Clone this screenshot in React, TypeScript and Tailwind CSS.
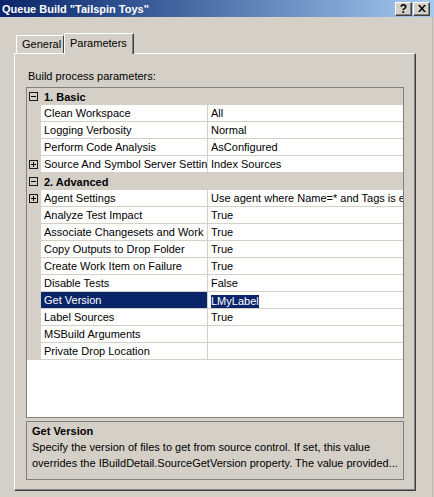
import React from "react";

function Box({ plus }: { plus?: boolean }) {
  return (
    <svg width="9" height="9" viewBox="0 0 9 9" className="block">
      <rect x="0.5" y="0.5" width="8" height="8" fill="none" stroke="#1a1a1a" />
      <line x1="2" y1="4.5" x2="7" y2="4.5" stroke="#000" />
      {plus && <line x1="4.5" y1="2" x2="4.5" y2="7" stroke="#000" />}
    </svg>
  );
}

function Category({ label }: { label: string }) {
  return (
    <div className="flex h-[17px] bg-[#d4d0c8] items-center">
      <div className="w-[14px] pl-[2px] flex items-center">
        <Box />
      </div>
      <div className="pl-[3px] font-bold leading-[16px] whitespace-nowrap">{label}</div>
    </div>
  );
}

function Row({
  name,
  value,
  plus,
  selected,
}: {
  name: string;
  value?: React.ReactNode;
  plus?: boolean;
  selected?: boolean;
}) {
  return (
    <div className="flex h-[17px] border-b border-[#d4d0c8]">
      <div className="w-[14px] shrink-0 bg-[#d4d0c8] pl-[2px] flex items-center">
        {plus && <Box plus />}
      </div>
      <div
        className={
          selected
            ? "w-[166px] shrink-0 pl-[3px] leading-[16px] overflow-hidden whitespace-nowrap bg-[#0a246a] text-white"
            : "w-[166px] shrink-0 pl-[3px] leading-[16px] overflow-hidden whitespace-nowrap"
        }
      >
        {name}
      </div>
      <div className="w-px shrink-0 bg-[#d4d0c8]" />
      <div className="w-[195px] shrink-0 pl-[3px] leading-[16px] overflow-hidden whitespace-nowrap">
        {value}
      </div>
    </div>
  );
}

export default function App() {
  return (
    <div className="w-[434px] h-[497px] bg-[#d4d0c8] overflow-hidden font-['Liberation_Sans',Arial,sans-serif] text-[11px] text-black">
      {/* Title bar */}
      <div className="h-[17px] flex items-center bg-linear-to-r from-[#0a246a] to-[#a6caf0] pl-[2px] pr-[4px]">
        <div className="flex-1 text-white font-bold leading-[14px] whitespace-nowrap">
          Queue Build "Tailspin Toys"
        </div>
        <div className="flex gap-[1px]">
          <div className="w-[17px] h-[14px] bg-[#d4d0c8] border border-t-white border-l-white border-r-[#404040] border-b-[#404040] shadow-[inset_-1px_-1px_0_#808080] flex items-center justify-center font-bold text-[12px] leading-[12px]">
            ?
          </div>
          <div className="w-[17px] h-[14px] bg-[#d4d0c8] border border-t-white border-l-white border-r-[#404040] border-b-[#404040] shadow-[inset_-1px_-1px_0_#808080] flex items-center justify-center">
            <svg width="8" height="7" viewBox="0 0 8 7">
              <path d="M0 0 L2 0 L4 2.5 L6 0 L8 0 L5 3.5 L8 7 L6 7 L4 4.5 L2 7 L0 7 L3 3.5 Z" fill="#000" />
            </svg>
          </div>
        </div>
      </div>

      <div className="w-[433px] h-[480px] border-r border-[#bdb9b1]">
        {/* Tabs */}
        <div className="pt-[16px]">
          <div className="flex items-end h-[20px] pl-[16px]">
            <div className="h-[18px] w-[48px] border-t border-l border-r border-t-white border-l-white border-r-[#404040] pl-[5px] pt-[2px] leading-[13px] whitespace-nowrap">
              General
            </div>
            <div className="relative z-10 -mb-px h-[21px] w-[70px] bg-[#d4d0c8] border-t border-l border-r border-t-white border-l-white border-r-[#404040] shadow-[inset_-1px_0_0_#808080] pl-[5px] pt-[3px] leading-[13px] whitespace-nowrap">
              Parameters
            </div>
          </div>

          {/* Panel */}
          <div className="ml-[14px] w-[402px] h-[438px] flex flex-col border border-t-white border-l-white border-r-[#404040] border-b-[#404040]">
            <div className="flex-1 border-r border-b border-[#808080] pl-[11px] pt-[16px]">
              <div className="ml-[2px] leading-[13px]">Build process parameters:</div>

              {/* Grid */}
              <div className="mt-[4px] w-[378px] h-[331px] border border-[#808080] bg-white">
                <Category label="1. Basic" />
                <Row name="Clean Workspace" value="All" />
                <Row name="Logging Verbosity" value="Normal" />
                <Row name="Perform Code Analysis" value="AsConfigured" />
                <Row name="Source And Symbol Server Settings" value="Index Sources" plus />
                <Category label="2. Advanced" />
                <Row
                  name="Agent Settings"
                  value="Use agent where Name=* and Tags is empty; Max Wait Time: 04:00:00"
                  plus
                />
                <Row name="Analyze Test Impact" value="True" />
                <Row name="Associate Changesets and Work Items" value="True" />
                <Row name="Copy Outputs to Drop Folder" value="True" />
                <Row name="Create Work Item on Failure" value="True" />
                <Row name="Disable Tests" value="False" />
                <Row
                  name="Get Version"
                  selected
                  value={
                    <span className="inline-block bg-[#0a246a] text-white leading-[13px] align-middle">
                      LMyLabel
                    </span>
                  }
                />
                <Row name="Label Sources" value="True" />
                <Row name="MSBuild Arguments" value="" />
                <Row name="Private Drop Location" value="" />
              </div>

              {/* Description */}
              <div className="mt-[3px] w-[378px] h-[59px] border border-[#808080] pl-[5px] pt-[2px]">
                <div className="font-bold leading-[14px]">Get Version</div>
                <div className="mt-[1px] leading-[16px] whitespace-nowrap">
                  Specify the version of files to get from source control. If set, this value
                  <br />
                  overrides the IBuildDetail.SourceGetVersion property. The value provided...
                </div>
              </div>
            </div>
          </div>
        </div>
      </div>
    </div>
  );
}
